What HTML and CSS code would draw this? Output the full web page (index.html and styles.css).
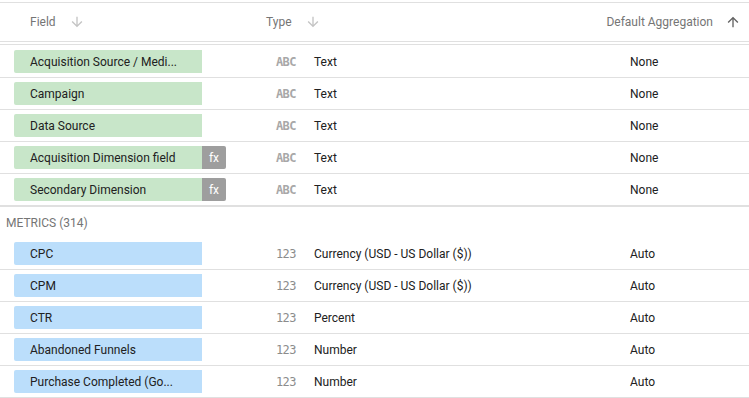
FILE: index.html
```html
<!DOCTYPE html>
<html>
<head>
<meta charset="utf-8">
<link rel="stylesheet" href="styles.css">
</head>
<body>
<div class="table">
  <div class="head">
    <div class="c-field hcell">Field <svg class="arrow" viewBox="0 0 24 24"><path d="M20 12l-1.41-1.41L13 16.17V4h-2v12.17l-5.58-5.59L4 12l8 8 8-8z"/></svg></div>
    <div class="c-type hcell">Type <svg class="arrow" viewBox="0 0 24 24"><path d="M20 12l-1.41-1.41L13 16.17V4h-2v12.17l-5.58-5.59L4 12l8 8 8-8z"/></svg></div>
    <div class="c-agg hcell right">Default Aggregation <svg class="arrow active" viewBox="0 0 24 24"><path d="M4 12l1.41 1.41L11 7.83V20h2V7.83l5.58 5.59L20 12l-8-8-8 8z"/></svg></div>
  </div>
  <div class="body">
    <div class="row">
      <div class="c-field"><div class="chip dim"><span class="name">Acquisition Source / Medi...</span></div></div>
      <div class="c-type"><span class="ticon">ABC</span><span>Text</span></div>
      <div class="c-agg">None</div>
    </div>
    <div class="row">
      <div class="c-field"><div class="chip dim"><span class="name">Campaign</span></div></div>
      <div class="c-type"><span class="ticon">ABC</span><span>Text</span></div>
      <div class="c-agg">None</div>
    </div>
    <div class="row">
      <div class="c-field"><div class="chip dim"><span class="name">Data Source</span></div></div>
      <div class="c-type"><span class="ticon">ABC</span><span>Text</span></div>
      <div class="c-agg">None</div>
    </div>
    <div class="row">
      <div class="c-field"><div class="chip dim"><span class="name">Acquisition Dimension field</span><span class="fx">fx</span></div></div>
      <div class="c-type"><span class="ticon">ABC</span><span>Text</span></div>
      <div class="c-agg">None</div>
    </div>
    <div class="row last">
      <div class="c-field"><div class="chip dim"><span class="name">Secondary Dimension</span><span class="fx">fx</span></div></div>
      <div class="c-type"><span class="ticon">ABC</span><span>Text</span></div>
      <div class="c-agg">None</div>
    </div>
    <div class="section">METRICS (314)</div>
    <div class="row">
      <div class="c-field"><div class="chip met"><span class="name">CPC</span></div></div>
      <div class="c-type"><span class="ticon num">123</span><span>Currency (USD - US Dollar ($))</span></div>
      <div class="c-agg">Auto</div>
    </div>
    <div class="row">
      <div class="c-field"><div class="chip met"><span class="name">CPM</span></div></div>
      <div class="c-type"><span class="ticon num">123</span><span>Currency (USD - US Dollar ($))</span></div>
      <div class="c-agg">Auto</div>
    </div>
    <div class="row">
      <div class="c-field"><div class="chip met"><span class="name">CTR</span></div></div>
      <div class="c-type"><span class="ticon num">123</span><span>Percent</span></div>
      <div class="c-agg">Auto</div>
    </div>
    <div class="row">
      <div class="c-field"><div class="chip met"><span class="name">Abandoned Funnels</span></div></div>
      <div class="c-type"><span class="ticon num">123</span><span>Number</span></div>
      <div class="c-agg">Auto</div>
    </div>
    <div class="row">
      <div class="c-field"><div class="chip met"><span class="name">Purchase Completed (Go...</span></div></div>
      <div class="c-type"><span class="ticon num">123</span><span>Number</span></div>
      <div class="c-agg">Auto</div>
    </div>
  </div>
</div>
</body>
</html>
```
FILE: styles.css
```css
* { box-sizing: border-box; }
html, body { margin: 0; padding: 0; background: #fff; }
body {
  font-family: Roboto, "Liberation Sans", Arial, sans-serif;
  font-size: 12px;
  color: #212121;
  width: 749px;
  height: 398px;
  overflow: hidden;
}
.table { padding-top: 2px; }
.head {
  display: grid;
  grid-template-columns: 266px 300px 1fr;
  height: 40px;
  border-top: 1px solid #e0e0e0;
  border-bottom: 1px solid #e0e0e0;
  color: #757575;
  white-space: nowrap;
}
.hcell { display: flex; align-items: center; }
.head .c-field { padding-left: 30px; }
.head .right { justify-content: flex-end; padding-right: 8px; }
.arrow { width: 16px; height: 16px; fill: #c4c4c4; margin-left: 13px; }
.arrow.active { fill: #616161; margin-left: 12px; }
.body { border-top: 1px solid #e0e0e0; margin-top: 2px; padding-top: 1px; }
.row {
  display: grid;
  grid-template-columns: 266px 364px 1fr;
  height: 32px;
  border-bottom: 1px solid #e0e0e0;
  align-items: start;
}
.row .c-field { padding: 4px 0 0 14px; }
.row .c-type, .row .c-agg { display: flex; align-items: center; height: 31px; }
.row .c-type { padding-left: 10px; }
.row.last { border-bottom: 2px solid #e0e0e0; height: 33px; }
.chip {
  display: flex;
  width: 212px;
  height: 23px;
  border-radius: 2px;
  overflow: hidden;
}
.chip .name {
  width: 188px;
  padding-left: 16px;
  display: flex;
  align-items: center;
  white-space: nowrap;
}
.chip.dim .name { background: #c8e6c9; }
.chip.met .name { background: #bbdefb; }
.fx {
  width: 24px;
  background: #9e9e9e;
  color: #fff;
  display: flex;
  align-items: center;
  justify-content: center;
  font-size: 12px;
}
.ticon {
  width: 38px;
  font-family: "DejaVu Sans Mono", monospace;
  font-weight: bold;
  font-size: 12px;
  color: #a8a8a8;
  letter-spacing: -0.6px;
  display: inline-block;
}
.ticon.num { color: #8c8c8c; font-weight: normal; }
.section {
  height: 31px;
  display: flex;
  align-items: center;
  padding-left: 6px;
  color: #757575;
  font-size: 12px;
}
```
